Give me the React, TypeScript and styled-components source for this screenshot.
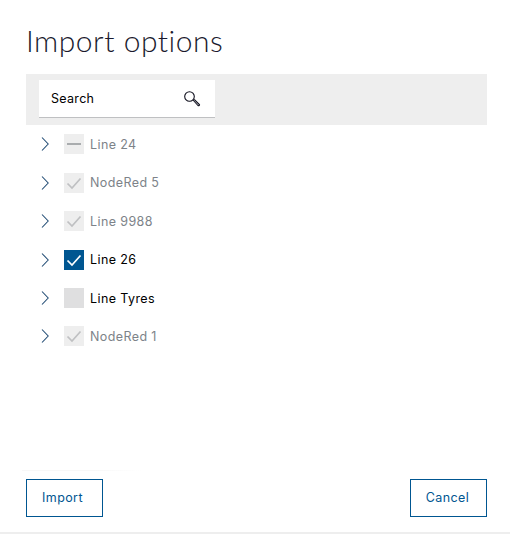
import React from "react";
import styled, { createGlobalStyle } from "styled-components";

const GlobalStyle = createGlobalStyle`
  html, body {
    margin: 0;
    padding: 0;
    background: #fff;
    font-family: "Inter", "Roboto", "Liberation Sans", sans-serif;
  }
`;

const Dialog = styled.div`
  width: 510px;
  height: 534px;
  box-sizing: border-box;
  display: flex;
  flex-direction: column;
  padding: 0 23px 0 26px;
  border-bottom: 2px solid #eeeeee;
`;

const Title = styled.h1`
  margin: 0;
  height: 74px;
  box-sizing: border-box;
  padding-top: 22px;
  font-family: "Lato", "Roboto", sans-serif;
  font-size: 30px;
  line-height: 36px;
  font-weight: 300;
  letter-spacing: 0.52px;
  color: #1a1a2e;
`;

const Toolbar = styled.div`
  height: 51px;
  box-sizing: border-box;
  padding: 6px 13px 0;
  background: #eeeeee;
`;

const SearchBox = styled.div`
  width: 176px;
  height: 38px;
  box-sizing: border-box;
  display: flex;
  align-items: center;
  justify-content: space-between;
  padding: 0 14px 0 12px;
  background: #fff;
  border-bottom: 1px solid #bfc0c2;
  font-size: 12.5px;
  letter-spacing: 0.3px;
  color: #000;
`;

const List = styled.ul`
  position: relative;
  flex: 1;
  list-style: none;
  margin: 0 0 8px;
  padding: 0.3px 0 0;

  &::after {
    content: "";
    position: absolute;
    left: -4px;
    bottom: 0;
    width: 120px;
    height: 1px;
    background: linear-gradient(to right, #f8f8f8 60%, #ffffff);
  }
`;

const Row = styled.li<{ $disabled?: boolean }>`
  height: 38.4px;
  display: flex;
  align-items: center;
  font-size: 12.5px;
  letter-spacing: 0.4px;
  color: ${(p) => (p.$disabled ? "#7d8389" : "#000")};
`;

const ChevronIcon = styled.svg`
  width: 8px;
  height: 14px;
  margin-left: 15px;
  margin-right: 15px;
  fill: none;
  stroke: #1f4a73;
  stroke-width: 1.05;
`;

const Check = styled.span<{ $kind: string }>`
  width: 20px;
  height: 20px;
  margin-right: 6px;
  display: flex;
  align-items: center;
  justify-content: center;
  background: ${(p) =>
    p.$kind === "on" ? "#005691" : p.$kind === "empty" ? "#dfdfe0" : "#eeeeee"};
`;

const Footer = styled.div`
  display: flex;
  justify-content: space-between;
  padding-bottom: 15px;
`;

const Button = styled.button<{ $shift?: number }>`
  width: 77px;
  height: 38px;
  padding: 0 ${(p) => p.$shift ?? 2}px 2px 0;
  background: #fff;
  border: 1px solid #005691;
  border-radius: 0;
  color: #005691;
  font-family: inherit;
  font-size: 12.5px;
  letter-spacing: 0.4px;
`;

function SearchIcon() {
  return (
    <svg width="18" height="18" viewBox="0 0 18 18" fill="none" stroke="#10101e">
      <circle cx="6.5" cy="6.5" r="4.8" strokeWidth="1.1" />
      <path d="M10 10 L15.4 16 M11.2 9.4 L16.8 15 M15.4 16 L16.8 15" strokeWidth="1.1" />
    </svg>
  );
}

function Mark({ kind }: { kind: string }) {
  if (kind === "mixed") {
    return (
      <svg width="20" height="20" viewBox="0 0 20 20">
        <path d="M3 10 H17" stroke="#a9acae" strokeWidth="2" />
      </svg>
    );
  }
  if (kind === "empty") return null;
  return (
    <svg width="20" height="20" viewBox="0 0 20 20" fill="none">
      <path
        d="M3.5 10.5 L8 15 L16.5 5.5"
        stroke={kind === "on" ? "#fff" : "#bfc0c2"}
        strokeWidth="1.7"
      />
    </svg>
  );
}

const items = [
  { name: "Line 24", kind: "mixed", disabled: true },
  { name: "NodeRed 5", kind: "off", disabled: true },
  { name: "Line 9988", kind: "off", disabled: true },
  { name: "Line 26", kind: "on", disabled: false },
  { name: "Line Tyres", kind: "empty", disabled: false },
  { name: "NodeRed 1", kind: "off", disabled: true },
];

export default function App() {
  return (
    <>
      <GlobalStyle />
      <Dialog>
        <Title>Import options</Title>
        <Toolbar>
          <SearchBox>
            Search
            <SearchIcon />
          </SearchBox>
        </Toolbar>
        <List>
          {items.map((item) => (
            <Row key={item.name} $disabled={item.disabled}>
              <ChevronIcon viewBox="0 0 8 14">
                <path d="M1 0.5 L7.2 7 L1 13.5" />
              </ChevronIcon>
              <Check $kind={item.kind}>
                <Mark kind={item.kind} />
              </Check>
              {item.name}
            </Row>
          ))}
        </List>
        <Footer>
          <Button $shift={4}>Import</Button>
          <Button>Cancel</Button>
        </Footer>
      </Dialog>
    </>
  );
}
